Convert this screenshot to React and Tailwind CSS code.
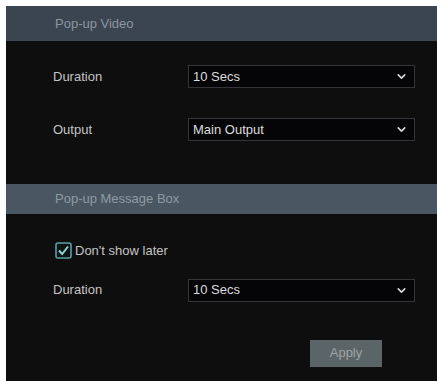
import { ChevronDown } from "lucide-react";

function Select({ value }) {
  return (
    <div className="flex h-[23px] w-[227px] items-center justify-between border border-[#333538] bg-[#050507] pl-[4px] pr-[6px] text-[13px] text-[#dcdcdc]">
      <span>{value}</span>
      <ChevronDown size={13} strokeWidth={3} className="text-[#d8d8d8]" />
    </div>
  );
}

function Row({ label, value, className }) {
  return (
    <div className={"flex items-center " + className}>
      <span className="w-[182px] shrink-0 pl-[47px] text-[13px] text-[#c4c4c4]">{label}</span>
      <Select value={value} />
    </div>
  );
}

export default function App() {
  return (
    <div
      className="h-[381px] w-[437px] bg-white pl-[6px] pt-[6px]"
      style={{ fontFamily: '"Liberation Sans", Arial, sans-serif' }}
    >
      <div className="flex h-full flex-col bg-[#0e0e0f]">
        <div className="flex h-[35px] items-center bg-[#3b4550] pl-[49px] text-[13px] text-[#8c969f]">
          Pop-up Video
        </div>
        <Row label="Duration" value="10 Secs" className="mt-[24px]" />
        <Row label="Output" value="Main Output" className="mt-[30px]" />
        <div className="mt-[43px] flex h-[30px] items-center bg-[#4a5762] pl-[49px] text-[13px] text-[#8e9aa3]">
          Pop-up Message Box
        </div>
        <div className="mt-[27px] flex items-center pl-[49px]">
          <svg width="17" height="17" viewBox="0 0 17 17">
            <rect x="1" y="1" width="15" height="15" rx="2" fill="#0d1414" stroke="#5c9ea6" strokeWidth="1.6" />
            <path d="M4 8.5 L7.2 12 L13 4.5" fill="none" stroke="#8fd0d4" strokeWidth="2" />
          </svg>
          <span className="ml-[3px] text-[13px] text-[#c4c4c4]">Don't show later</span>
        </div>
        <Row label="Duration" value="10 Secs" className="mt-[18px]" />
        <div className="mt-[38px] flex pl-[304px]">
          <div className="flex h-[27px] w-[72px] items-center justify-center bg-[#5b6466] text-[13px] text-[#9ea5a6]">
            Apply
          </div>
        </div>
      </div>
    </div>
  );
}
